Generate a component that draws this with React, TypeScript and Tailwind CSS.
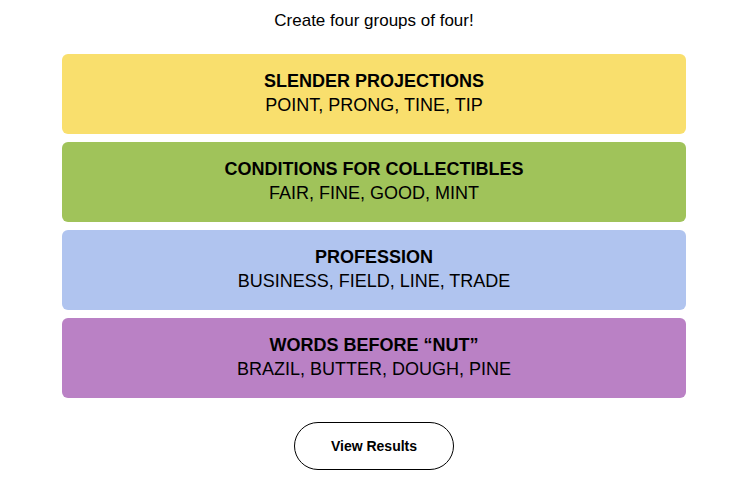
const groups = [
  { title: 'SLENDER PROJECTIONS', words: 'POINT, PRONG, TINE, TIP', color: 'bg-[#f9df6d]' },
  { title: 'CONDITIONS FOR COLLECTIBLES', words: 'FAIR, FINE, GOOD, MINT', color: 'bg-[#a0c35a]' },
  { title: 'PROFESSION', words: 'BUSINESS, FIELD, LINE, TRADE', color: 'bg-[#b0c4ef]' },
  { title: 'WORDS BEFORE \u201cNUT\u201d', words: 'BRAZIL, BUTTER, DOUGH, PINE', color: 'bg-[#ba81c5]' },
]

export default function App() {
  return (
    <div className="w-[748px] h-[483px] bg-white text-black font-['Liberation_Sans',Arial,sans-serif] flex flex-col items-center">
      <p className="mt-[10px] h-[22px] text-[17px] leading-[22px]">Create four groups of four!</p>
      <div className="mt-[22px] w-[624px] flex flex-col gap-2">
        {groups.map((g) => (
          <div
            key={g.title}
            className={`${g.color} h-[80px] pb-[3px] rounded-[6px] flex flex-col items-center justify-center`}
          >
            <h3 className="text-[18px] leading-[24px] font-bold">{g.title}</h3>
            <p className="text-[18px] leading-[24px]">{g.words}</p>
          </div>
        ))}
      </div>
      <button className="mt-[24px] w-[160px] h-[48px] rounded-full border border-black text-[14px] font-semibold">
        View Results
      </button>
    </div>
  )
}
